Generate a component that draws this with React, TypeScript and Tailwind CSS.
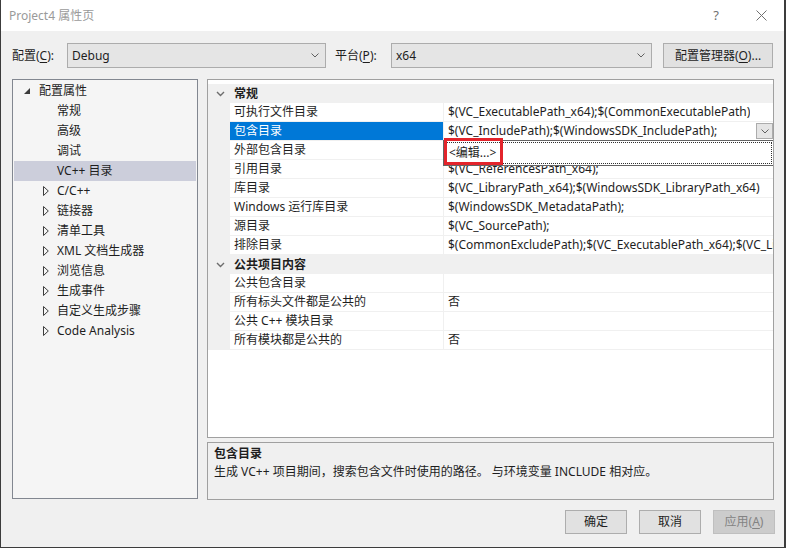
import React from "react";

const font = "font-['Noto_Sans','Noto_Sans_CJK_SC',sans-serif]";

const treeItems: { label: string; kind: "root" | "leaf" | "collapsed"; selected?: boolean }[] = [
  { label: "配置属性", kind: "root" },
  { label: "常规", kind: "leaf" },
  { label: "高级", kind: "leaf" },
  { label: "调试", kind: "leaf" },
  { label: "VC++ 目录", kind: "leaf", selected: true },
  { label: "C/C++", kind: "collapsed" },
  { label: "链接器", kind: "collapsed" },
  { label: "清单工具", kind: "collapsed" },
  { label: "XML 文档生成器", kind: "collapsed" },
  { label: "浏览信息", kind: "collapsed" },
  { label: "生成事件", kind: "collapsed" },
  { label: "自定义生成步骤", kind: "collapsed" },
  { label: "Code Analysis", kind: "collapsed" },
];

const generalRows = [
  ["可执行文件目录", "$(VC_ExecutablePath_x64);$(CommonExecutablePath)"],
  ["包含目录", "$(VC_IncludePath);$(WindowsSDK_IncludePath);"],
  ["外部包含目录", ""],
  ["引用目录", "$(VC_ReferencesPath_x64);"],
  ["库目录", "$(VC_LibraryPath_x64);$(WindowsSDK_LibraryPath_x64)"],
  ["Windows 运行库目录", "$(WindowsSDK_MetadataPath);"],
  ["源目录", "$(VC_SourcePath);"],
  ["排除目录", "$(CommonExcludePath);$(VC_ExecutablePath_x64);$(VC_LibraryPath_x64);$(VC_IncludePath)"],
];

const publicRows = [
  ["公共包含目录", ""],
  ["所有标头文件都是公共的", "否"],
  ["公共 C++ 模块目录", ""],
  ["所有模块都是公共的", "否"],
];

const SmallChevron = ({ className = "" }: { className?: string }) => (
  <svg width="8" height="5" viewBox="0 0 8 5" className={className}>
    <path d="M0.5 0.5 L4 4 L7.5 0.5" fill="none" stroke="#606060" strokeWidth="1" />
  </svg>
);

const Combo = ({ value, width }: { value: string; width: string }) => (
  <div
    className={`${width} h-[25px] bg-[#e5e5e5] border border-[#acacac] flex items-center justify-between pl-[4px] pr-[6px] text-[12px] text-[#1e1e1e]`}
  >
    <span>{value}</span>
    <SmallChevron />
  </div>
);

const Button = ({ children, disabled }: { children: React.ReactNode; disabled?: boolean }) => (
  <div
    className={`w-[62px] h-[24px] flex items-center justify-center text-[12px] border ${
      disabled ? "bg-[#cccccc] border-[#bfbfbf] text-[#838383]" : "bg-[#e1e1e1] border-[#adadad] text-[#1e1e1e]"
    }`}
  >
    {children}
  </div>
);

const TreeRow = ({ item }: { item: (typeof treeItems)[number] }) => (
  <div className={`h-[20px] flex items-center text-[12px] text-[#1e1e1e] ${item.selected ? "bg-[#cccedb]" : ""}`}>
    {item.kind === "root" && (
      <>
        <svg width="6" height="6" viewBox="0 0 6 6" className="ml-[10px] mr-[9px]">
          <polygon points="6,0 6,6 0,6" fill="#3c3c3c" />
        </svg>
        <span>{item.label}</span>
      </>
    )}
    {item.kind === "leaf" && <span className="ml-[43px]">{item.label}</span>}
    {item.kind === "collapsed" && (
      <>
        <svg width="6" height="10" viewBox="0 0 6 10" className="ml-[29px] mr-[8px]">
          <polygon points="0.5,0.5 5.3,5 0.5,9.5" fill="none" stroke="#3c3c3c" strokeWidth="1" />
        </svg>
        <span>{item.label}</span>
      </>
    )}
  </div>
);

const CategoryRow = ({ label }: { label: string }) => (
  <div className="h-[19px] flex items-center bg-[#f0f0f0] shrink-0">
    <div className="w-[22px] flex justify-center pl-[2px]">
      <svg width="9" height="6" viewBox="0 0 9 6">
        <path d="M1 1 L4.5 4.5 L8 1" fill="none" stroke="#6d6d6d" strokeWidth="1.4" />
      </svg>
    </div>
    <span className="pl-[4px] font-bold text-[12px] text-[#1e1e1e]">{label}</span>
  </div>
);

const PropRow = ({ name, value, selected }: { name: string; value: string; selected?: boolean }) => (
  <div className="h-[19px] flex shrink-0 text-[12px]">
    <div className="w-[22px] bg-[#f0f0f0]" />
    <div
      className={`w-[214px] shrink-0 flex items-center pl-[4px] border-r border-b border-[#f0f0f0] ${
        selected ? "bg-[#0078d7] text-white" : "bg-white text-[#1e1e1e]"
      }`}
    >
      <span className="whitespace-nowrap">{name}</span>
    </div>
    <div className="relative flex-1 min-w-0 flex items-center pl-[4px] bg-white border-b border-[#f0f0f0] text-[#1e1e1e]">
      <span className="whitespace-nowrap overflow-hidden">{value}</span>
      {selected && (
        <>
          <div className="absolute right-[0px] top-[1px] w-[17px] h-[16px] bg-[#e5e5e5] border border-[#acacac] flex items-center justify-center">
            <SmallChevron />
          </div>
          <div className="absolute left-[-1px] right-[-1px] top-[18px] h-[26px] bg-white border border-[#646464] z-10 p-[1px]">
            <div className="h-full border border-dotted border-[#303030] flex items-center pl-[3px] text-[#1e1e1e]">
              &lt;编辑...&gt;
            </div>
            <div className="absolute left-[0px] top-[-3px] w-[59px] h-[27px] border-[3px] border-[#e3242b]" />
          </div>
        </>
      )}
    </div>
  </div>
);

export default function App() {
  return (
    <div
      className={`w-[786px] h-[548px] bg-[#f0f0f0] border-l border-r-2 border-b border-[#3c3c3c] flex flex-col ${font} overflow-hidden`}
    >
      {/* title bar */}
      <div className="h-[31px] bg-white flex items-center shrink-0">
        <span className="ml-[8px] text-[12px] text-[#9a9a9a]">Project4 属性页</span>
        <span className="ml-auto mr-[37px] text-[13px] text-[#707070]">?</span>
        <svg width="11" height="11" viewBox="0 0 11 11" className="mr-[17px]">
          <path d="M0.5 0.5 L10.5 10.5 M10.5 0.5 L0.5 10.5" stroke="#707070" strokeWidth="1" />
        </svg>
      </div>

      {/* configuration row */}
      <div className="mt-[12px] h-[25px] flex items-center pl-[11px] shrink-0 text-[12px] text-[#1e1e1e]">
        <span className="w-[55px]">
          配置(<span className="underline underline-offset-2">C</span>):
        </span>
        <Combo value="Debug" width="w-[259px]" />
        <span className="ml-[9px] w-[56px]">
          平台(<span className="underline underline-offset-2">P</span>):
        </span>
        <Combo value="x64" width="w-[261px]" />
        <div className="ml-[11px] w-[110px] h-[25px] bg-[#e1e1e1] border border-[#adadad] flex items-center justify-center">
          配置管理器(<span className="underline underline-offset-2">O</span>)...
        </div>
      </div>

      {/* main area */}
      <div className="mt-[11px] flex pl-[11px] shrink-0">
        <div className="w-[186px] h-[420px] border border-[#828790] bg-[#f5f5f5] pt-[1px] px-[1px]">
          {treeItems.map((it) => (
            <TreeRow key={it.label} item={it} />
          ))}
        </div>

        <div className="ml-[9px] w-[567px] flex flex-col">
          <div className="h-[359px] border border-[#a0a0a0] bg-white flex flex-col pt-[4px] overflow-hidden">
            <CategoryRow label="常规" />
            {generalRows.map(([n, v]) => (
              <PropRow key={n} name={n} value={v} selected={n === "包含目录"} />
            ))}
            <CategoryRow label="公共项目内容" />
            {publicRows.map(([n, v]) => (
              <PropRow key={n} name={n} value={v} />
            ))}
          </div>

          <div className="mt-[4px] h-[58px] border border-[#a0a0a0] bg-[#f0f0f0] px-[6px] pt-[2px] text-[12px] text-[#1e1e1e] leading-[18px]">
            <div className="font-bold">包含目录</div>
            <div>生成 VC++ 项目期间，搜索包含文件时使用的路径。 与环境变量 INCLUDE 相对应。</div>
          </div>
        </div>
      </div>

      {/* buttons */}
      <div className="mt-[10px] flex justify-end gap-[12px] pr-[9px]">
        <Button>确定</Button>
        <Button>取消</Button>
        <Button disabled>
          应用(<span className="underline underline-offset-2">A</span>)
        </Button>
      </div>
    </div>
  );
}
